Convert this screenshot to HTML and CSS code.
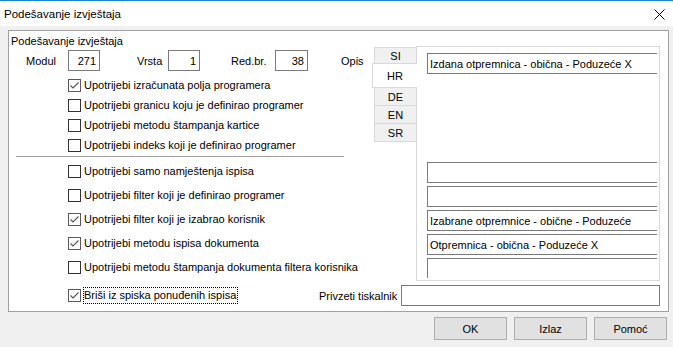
FILE: index.html
```html
<!DOCTYPE html>
<html lang="hr">
<head>
  <meta charset="UTF-8">
  <title>Podešavanje izvještaja</title>
  <link rel="stylesheet" href="styles.css">
</head>
<body>

  <div class="titlebar">
    <span class="title">Podešavanje izvještaja</span>
    <svg class="close" width="11" height="11" viewBox="0 0 11 11">
      <path d="M0.5 0.5 L10.5 10.5 M10.5 0.5 L0.5 10.5" stroke="#000" stroke-width="1" fill="none"/>
    </svg>
  </div>

  <div class="group">
    <div class="caption">Podešavanje izvještaja</div>

    <div class="main">
      <!-- lijevi dio -->
      <div class="left">
        <div class="fields">
          <label class="lbl lbl-modul">Modul</label>
          <input class="num" type="text" value="271" readonly>
          <label class="lbl lbl-vrsta">Vrsta</label>
          <input class="num" type="text" value="1" readonly>
          <label class="lbl lbl-red">Red.br.</label>
          <input class="num num-wide" type="text" value="38" readonly>
          <label class="lbl lbl-opis">Opis</label>
        </div>

        <ul class="checks">
          <li><span class="box checked"><svg width="11" height="11" viewBox="0 0 11 11"><path d="M1.5 5.5 L4 8 L9.5 2.5" stroke="#555" stroke-width="1.1" fill="none"/></svg></span>Upotrijebi izračunata polja programera</li>
          <li><span class="box"></span>Upotrijebi granicu koju je definirao programer</li>
          <li><span class="box"></span>Upotrijebi metodu štampanja kartice</li>
          <li><span class="box"></span>Upotrijebi indeks koji je definirao programer</li>
        </ul>

        <div class="sep"></div>

        <ul class="checks wide">
          <li><span class="box"></span>Upotrijebi samo namještenja ispisa</li>
          <li><span class="box"></span>Upotrijebi filter koji je definirao programer</li>
          <li><span class="box checked"><svg width="11" height="11" viewBox="0 0 11 11"><path d="M1.5 5.5 L4 8 L9.5 2.5" stroke="#555" stroke-width="1.1" fill="none"/></svg></span>Upotrijebi filter koji je izabrao korisnik</li>
          <li><span class="box checked"><svg width="11" height="11" viewBox="0 0 11 11"><path d="M1.5 5.5 L4 8 L9.5 2.5" stroke="#555" stroke-width="1.1" fill="none"/></svg></span>Upotrijebi metodu ispisa dokumenta</li>
          <li><span class="box"></span>Upotrijebi metodu štampanja dokumenta filtera korisnika</li>
        </ul>
      </div>

      <!-- jezici -->
      <div class="tabs">
        <div class="tab-list">
          <div class="tab">SI</div>
          <div class="tab active">HR</div>
          <div class="tab">DE</div>
          <div class="tab">EN</div>
          <div class="tab">SR</div>
        </div>
        <div class="tab-panel">
          <div class="panel-inner">
            <input class="txt first" type="text" value="Izdana otpremnica - obična - Poduzeće X" readonly>
            <input class="txt gap" type="text" value="" readonly>
            <input class="txt" type="text" value="" readonly>
            <input class="txt" type="text" value="Izabrane otpremnice - obične - Poduzeće" readonly>
            <input class="txt" type="text" value="Otpremnica - obična - Poduzeće X" readonly>
            <input class="txt" type="text" value="" readonly>
          </div>
        </div>
      </div>
    </div>

    <div class="bottom">
      <div class="bottom-check">
        <span class="box checked"><svg width="11" height="11" viewBox="0 0 11 11"><path d="M1.5 5.5 L4 8 L9.5 2.5" stroke="#555" stroke-width="1.1" fill="none"/></svg></span>
        <span class="focus">Briši iz spiska ponuđenih ispisa</span>
      </div>
      <label class="printer-lbl">Privzeti tiskalnik</label>
      <input class="printer" type="text" value="" readonly>
    </div>
  </div>

  <div class="buttons">
    <button class="btn">OK</button>
    <button class="btn">Izlaz</button>
    <button class="btn">Pomoć</button>
  </div>

</body>
</html>
```

FILE: styles.css
```css
body {
  margin: 0;
  width: 673px;
  height: 347px;
  background: #f0f0f0;
  font-family: "Liberation Sans", Arial, sans-serif;
  font-size: 11px;
  color: #000;
  overflow: hidden;
}

input, button {
  font-family: "Liberation Sans", Arial, sans-serif;
  font-size: 11px;
  color: #000;
  box-sizing: border-box;
  margin: 0;
  outline: none;
}

.titlebar {
  height: 26px;
  box-sizing: border-box;
  border-top: 1px solid #1883d7;
  background: #fff;
  display: flex;
  align-items: center;
  padding: 0 8px 0 4px;
}

.title {
  font-size: 11.5px;
}

.close {
  margin-left: auto;
  margin-top: 2px;
}

.group {
  margin: 4px 0 0 8px;
  width: 661px;
  height: 282px;
  box-sizing: border-box;
  border: 1px solid #a0a0a0;
  background: #fff;
}

.caption {
  height: 15px;
  line-height: 21px;
  padding-left: 2px;
}

.main {
  display: flex;
  height: 235px;
}

.left {
  width: 363px;
}

.fields {
  display: flex;
  align-items: center;
  height: 21px;
  margin-top: 4px;
}

.lbl-modul { margin-left: 17px; width: 42px; }
.lbl-vrsta { margin-left: 37px; width: 31px; }
.lbl-red { margin-left: 31px; width: 44px; }
.lbl-opis { margin-left: 33px; }

.num {
  width: 32px;
  height: 21px;
  border: 1px solid #7a7a7a;
  padding: 0 3px;
  text-align: right;
  background: #fff;
}

.num-wide {
  width: 33px;
}

.checks {
  list-style: none;
  margin: 4px 0 0;
  padding: 0 0 0 59px;
}

.checks li {
  height: 20px;
  display: flex;
  align-items: center;
  white-space: nowrap;
}

.checks.wide {
  margin-top: 2px;
}

.checks.wide li {
  height: 24px;
}

.box {
  width: 13px;
  height: 13px;
  box-sizing: border-box;
  border: 1px solid #333;
  background: #fff;
  margin-right: 3px;
  flex: none;
  display: flex;
  align-items: center;
  justify-content: center;
}

.box.checked {
  border-color: #5a5a5a;
}

.sep {
  height: 1px;
  width: 328px;
  margin: 1px 0 0 7px;
  background: #a0a0a0;
}

.tabs {
  display: flex;
}

.tab-list {
  width: 44px;
  padding-top: 1px;
  display: flex;
  flex-direction: column;
  align-items: flex-end;
}

.tab {
  width: 42px;
  height: 19px;
  box-sizing: border-box;
  border: 1px solid #d9d9d9;
  border-right: none;
  background: #f0f0f0;
  margin-top: -1px;
  display: flex;
  align-items: center;
  justify-content: center;
}

.tab:first-child {
  margin-top: 0;
  height: 18px;
}

.tab.active {
  width: 45px;
  height: 25px;
  margin-top: -2px;
  margin-right: -1px;
  background: #fff;
  position: relative;
  z-index: 1;
}

.tab-panel {
  width: 244px;
  height: 235px;
  box-sizing: border-box;
  border: 1px solid #d9d9d9;
  background: #fff;
  padding: 6px 2px 2px 10px;
}

.panel-inner {
  height: 225px;
  overflow: hidden;
}

.txt {
  display: block;
  width: 240px;
  height: 21px;
  border: 1px solid #7a7a7a;
  border-right: none;
  padding: 0 2px;
  background: #fff;
  margin-top: 3px;
}

.txt.first {
  margin-top: 0;
}

.txt.gap {
  margin-top: 88px;
}

.bottom {
  display: flex;
  align-items: center;
  height: 29px;
  padding-left: 59px;
}

.bottom-check {
  width: 251px;
  display: flex;
  align-items: center;
}

.focus {
  outline: 1px dotted #000;
  padding: 1px 1px 2px 0;
}

.printer-lbl {
  width: 82px;
}

.printer {
  width: 259px;
  height: 21px;
  border: 1px solid #7a7a7a;
  background: #fff;
}

.buttons {
  display: flex;
  justify-content: flex-end;
  gap: 7px;
  margin-top: 5px;
  padding-right: 6px;
}

.btn {
  width: 73px;
  height: 23px;
  border: 1px solid #adadad;
  background: #e1e1e1;
  padding: 0;
}
```
